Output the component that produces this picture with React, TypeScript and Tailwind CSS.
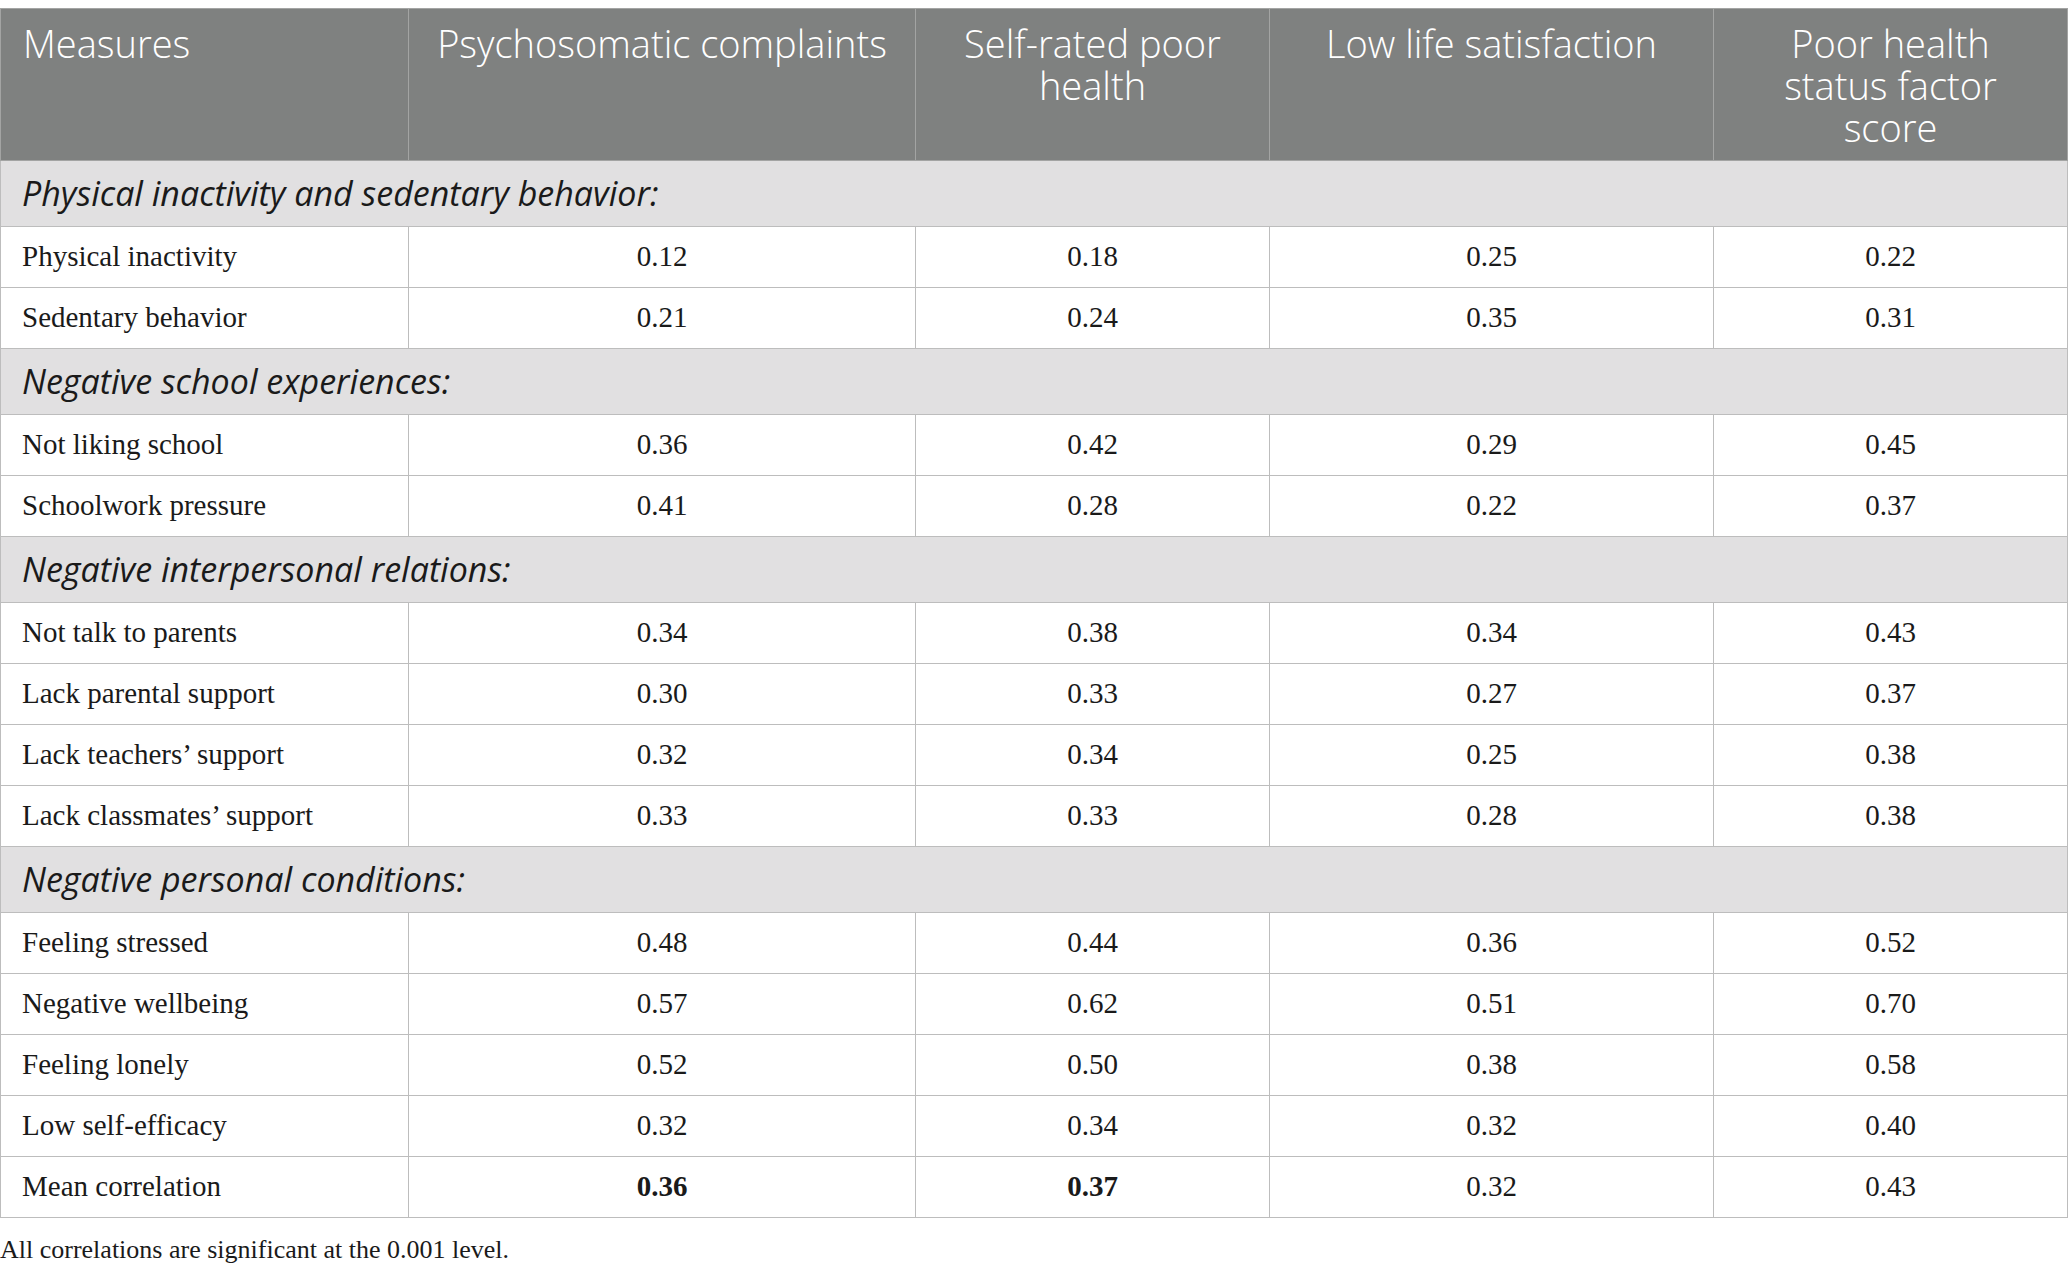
import React from "react";

type Row = { label: string; vals: string[]; bold?: boolean[] };
type Section = { title: string; rows: Row[] };

const sections: Section[] = [
  {
    title: "Physical inactivity and sedentary behavior:",
    rows: [
      { label: "Physical inactivity", vals: ["0.12", "0.18", "0.25", "0.22"] },
      { label: "Sedentary behavior", vals: ["0.21", "0.24", "0.35", "0.31"] },
    ],
  },
  {
    title: "Negative school experiences:",
    rows: [
      { label: "Not liking school", vals: ["0.36", "0.42", "0.29", "0.45"] },
      { label: "Schoolwork pressure", vals: ["0.41", "0.28", "0.22", "0.37"] },
    ],
  },
  {
    title: "Negative interpersonal relations:",
    rows: [
      { label: "Not talk to parents", vals: ["0.34", "0.38", "0.34", "0.43"] },
      { label: "Lack parental support", vals: ["0.30", "0.33", "0.27", "0.37"] },
      { label: "Lack teachers\u2019 support", vals: ["0.32", "0.34", "0.25", "0.38"] },
      { label: "Lack classmates\u2019 support", vals: ["0.33", "0.33", "0.28", "0.38"] },
    ],
  },
  {
    title: "Negative personal conditions:",
    rows: [
      { label: "Feeling stressed", vals: ["0.48", "0.44", "0.36", "0.52"] },
      { label: "Negative wellbeing", vals: ["0.57", "0.62", "0.51", "0.70"] },
      { label: "Feeling lonely", vals: ["0.52", "0.50", "0.38", "0.58"] },
      { label: "Low self-efficacy", vals: ["0.32", "0.34", "0.32", "0.40"] },
      {
        label: "Mean correlation",
        vals: ["0.36", "0.37", "0.32", "0.43"],
        bold: [true, true, false, false],
      },
    ],
  },
];

const sans = { fontFamily: '"Open Sans", "Noto Sans", sans-serif' };
const serif = { fontFamily: '"Liberation Serif", "DejaVu Serif", serif' };

export default function App() {
  return (
    <div className="w-[2068px] h-[1275px] bg-white pt-[8px] overflow-hidden">
      <table className="border-collapse w-[2067px] table-fixed">
        <colgroup>
          <col className="w-[408px]" />
          <col className="w-[507px]" />
          <col className="w-[354px]" />
          <col className="w-[444px]" />
          <col className="w-[354px]" />
        </colgroup>
        <thead>
          <tr className="h-[152px] bg-[#7f8180] text-white text-[38px] leading-[42px] font-light" style={sans}>
            <th className="border border-[#a3a4a3] align-top text-left font-light px-[22px] pt-[13px] whitespace-nowrap">Measures</th>
            <th className="border border-[#a3a4a3] align-top text-center font-light px-[4px] pt-[13px] whitespace-nowrap">Psychosomatic complaints</th>
            <th className="border border-[#a3a4a3] align-top text-center font-light px-[4px] pt-[13px] whitespace-nowrap">
              Self-rated poor
              <br />
              health
            </th>
            <th className="border border-[#a3a4a3] align-top text-center font-light px-[4px] pt-[13px] whitespace-nowrap">Low life satisfaction</th>
            <th className="border border-[#a3a4a3] align-top text-center font-light px-[4px] pt-[13px] whitespace-nowrap">
              Poor health
              <br />
              status factor
              <br />
              score
            </th>
          </tr>
        </thead>
        <tbody>
          {sections.map((s) => (
            <React.Fragment key={s.title}>
              <tr className="h-[66px] bg-[#e1e0e1]">
                <td
                  colSpan={5}
                  className="border border-[#bdbdbd] px-[21px] italic text-[34px] text-[#1a1a1a] align-middle"
                  style={sans}
                >
                  {s.title}
                </td>
              </tr>
              {s.rows.map((r) => (
                <tr key={r.label} className="h-[61px] text-[29px] text-[#1a1a1a]" style={serif}>
                  <td className="border border-[#bdbdbd] px-[21px] text-left align-middle">{r.label}</td>
                  {r.vals.map((v, i) => (
                    <td
                      key={i}
                      className={
                        "border border-[#bdbdbd] text-center align-middle" +
                        (r.bold && r.bold[i] ? " font-bold" : "")
                      }
                    >
                      {v}
                    </td>
                  ))}
                </tr>
              ))}
            </React.Fragment>
          ))}
        </tbody>
      </table>
      <div className="mt-[12px] text-[26px] text-[#1a1a1a]" style={serif}>
        All correlations are significant at the 0.001 level.
      </div>
    </div>
  );
}
